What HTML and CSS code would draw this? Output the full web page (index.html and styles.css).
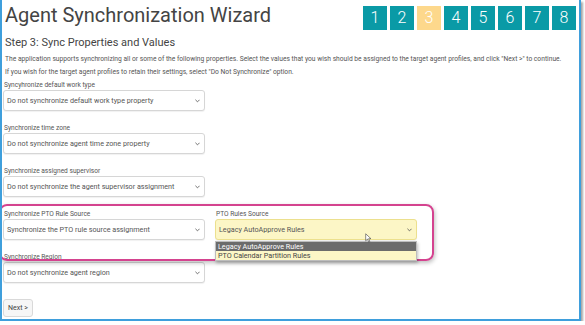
FILE: index.html
```html
<!DOCTYPE html>
<html lang="en">
<head>
    <meta charset="UTF-8">
    <title>Agent Synchronization Wizard</title>
    <link rel="stylesheet" href="styles.css">
</head>
<body>
    <div class="frame">
        <div class="top">
            <h1>Agent Synchronization Wizard</h1>
            <ol class="steps">
                <li>1</li>
                <li>2</li>
                <li class="current">3</li>
                <li>4</li>
                <li>5</li>
                <li>6</li>
                <li>7</li>
                <li>8</li>
            </ol>
        </div>

        <h2>Step 3: Sync Properties and Values</h2>
        <p class="intro">The application supports synchronizing all or some of the following properties. Select the values that you wish should be assigned to the target agent profiles, and click "Next &gt;" to continue.</p>
        <p class="intro">If you wish for the target agent profiles to retain their settings, select "Do Not Synchronize" option.</p>

        <div class="fields">
            <div class="field">
                <label>Syncyhronize default work type</label>
                <div class="select"><span>Do not synchronize default work type property</span><svg class="chev" viewBox="0 0 6 4"><polyline points="0.5,0.5 3,3 5.5,0.5"/></svg></div>
            </div>
            <div class="field">
                <label>Synchronize time zone</label>
                <div class="select"><span>Do not synchronize agent time zone property</span><svg class="chev" viewBox="0 0 6 4"><polyline points="0.5,0.5 3,3 5.5,0.5"/></svg></div>
            </div>
            <div class="field">
                <label>Synchronize assigned supervisor</label>
                <div class="select"><span>Do not synchronize the agent supervisor assignment</span><svg class="chev" viewBox="0 0 6 4"><polyline points="0.5,0.5 3,3 5.5,0.5"/></svg></div>
            </div>
            <div class="field-row">
                <div class="field">
                    <label>Synchronize PTO Rule Source</label>
                    <div class="select"><span>Synchronize the PTO rule source assignment</span><svg class="chev" viewBox="0 0 6 4"><polyline points="0.5,0.5 3,3 5.5,0.5"/></svg></div>
                </div>
                <div class="field">
                    <label>PTO Rules Source</label>
                    <div class="select open"><span>Legacy AutoApprove Rules</span><svg class="chev" viewBox="0 0 6 4"><polyline points="0.5,0.5 3,3 5.5,0.5"/></svg></div>
                    <ul class="options">
                        <li class="active">Legacy AutoApprove Rules</li>
                        <li>PTO Calendar Partition Rules</li>
                    </ul>
                    <svg class="cursor" viewBox="0 0 10 14"><path d="M1 1 L1 11 L3.5 8.6 L5.3 12.6 L6.9 11.9 L5.1 8 L8.5 8 Z"/></svg>
                </div>
                <div class="highlight"></div>
            </div>
            <div class="field">
                <label>Synchronize Region</label>
                <div class="select"><span>Do not synchronize agent region</span><svg class="chev" viewBox="0 0 6 4"><polyline points="0.5,0.5 3,3 5.5,0.5"/></svg></div>
            </div>
        </div>

        <button class="next">Next &gt;</button>
    </div>
</body>
</html>
```

FILE: styles.css
```css
body {
    margin: 0;
    background-color: #fff;
    font-family: Roboto, "Liberation Sans", sans-serif;
    color: #555;
}
.frame {
    width: 576px;
    height: 319px;
    padding-left: 1px;
    border: 2px solid #3f9fdc;
    border-top: none;
    box-shadow: 2px 2px 2px rgba(0,0,0,0.35);
    overflow: hidden;
}
.top {
    display: flex;
    justify-content: space-between;
    align-items: flex-start;
    padding-top: 2px;
    height: 30px;
}
h1 {
    margin: 0 0 0 2px;
    font-size: 20px;
    font-weight: 400;
    line-height: 26px;
    color: #444;
}
.steps {
    display: flex;
    gap: 3px;
    margin: 4px 3px 0 0;
    padding: 0;
    list-style: none;
}
.steps li {
    width: 24px;
    height: 24px;
    line-height: 24px;
    text-align: center;
    background-color: #0a9aa6;
    color: #fff;
    font-size: 16px;
    font-weight: 300;
}
.steps li.current {
    background-color: #fdd88c;
}
h2 {
    margin: 4px 0 3px 2px;
    font-size: 11px;
    font-weight: 400;
    line-height: 14px;
    color: #444;
}
.intro {
    margin: 0 0 0 2px;
    font-size: 6.7px;
    line-height: 12.5px;
    color: #555;
}
.fields {
    display: flex;
    flex-direction: column;
    gap: 13px;
    margin-top: 3px;
}
.field {
    position: relative;
    width: 202px;
}
.field label {
    display: block;
    height: 9px;
    padding-left: 1px;
    font-size: 6.6px;
    line-height: 9px;
    color: #555;
}
.select {
    display: flex;
    align-items: center;
    justify-content: space-between;
    box-sizing: border-box;
    height: 21px;
    padding: 0 4px 0 3px;
    border: 1px solid #d6d6d6;
    border-radius: 3px;
    background-color: #fff;
    box-shadow: 0 1px 1px rgba(0,0,0,0.06);
    font-size: 7.2px;
    color: #555;
}
.select.open {
    background-color: #fcf6c6;
    border-color: #ece08e;
}
.chev {
    width: 5px;
    height: 4px;
    fill: none;
    stroke: #555;
    stroke-width: 1;
}
.field-row {
    position: relative;
    display: flex;
    gap: 10px;
}
.options {
    position: absolute;
    left: 0;
    top: 31px;
    width: 202px;
    margin: 0;
    padding: 0;
    list-style: none;
    background-color: #fcf6c6;
    border: 1px solid #bdbdbd;
    box-sizing: border-box;
    box-shadow: 1px 2px 3px rgba(0,0,0,0.25);
    z-index: 2;
}
.options li {
    height: 9px;
    padding-left: 2px;
    font-size: 7.2px;
    line-height: 9px;
    color: #444;
}
.options li.active {
    background-color: #6b6b6b;
    color: #fff;
}
.cursor {
    position: absolute;
    left: 150px;
    top: 23px;
    width: 7px;
    height: 10px;
    fill: #fff;
    stroke: #333;
    stroke-width: 0.8;
    z-index: 3;
}
.highlight {
    position: absolute;
    left: -4px;
    top: -6px;
    width: 431px;
    height: 53px;
    border: 2px solid #d4438f;
    border-radius: 8px;
    box-shadow: 1px 2px 4px rgba(0,0,0,0.25);
    pointer-events: none;
    z-index: 1;
}
.next {
    margin-top: 16px;
    height: 18px;
    padding: 0 4px;
    border: 1px solid #d9d9d9;
    border-radius: 3px;
    background-color: #f6f6f6;
    font-family: Roboto, "Liberation Sans", sans-serif;
    font-size: 7px;
    color: #444;
}
```
